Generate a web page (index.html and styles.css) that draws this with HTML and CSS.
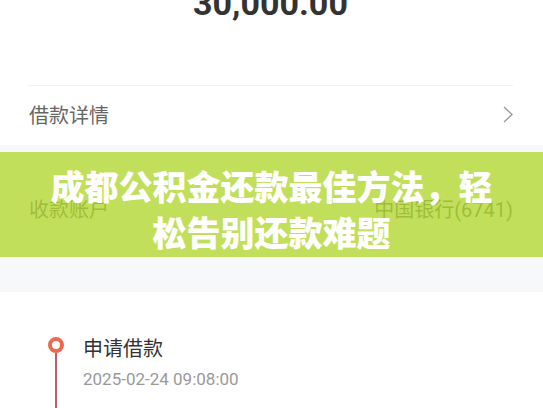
FILE: index.html
```html
<!DOCTYPE html>
<html lang="zh-CN">
<head>
  <meta charset="UTF-8" />
  <title>借款详情</title>
  <link rel="stylesheet" href="styles.css">
</head>
<body>
  <div class="page">
    <div class="card summary">
      <div class="amount">30,000.00</div>
      <div class="row detail-row">
        <span class="row-label">借款详情</span>
        <svg class="chevron" width="10" height="17" viewBox="0 0 10 17">
          <path d="M1 1 L9 8.5 L1 16" fill="none" stroke="#999" stroke-width="1.4" />
        </svg>
      </div>
    </div>

    <div class="card account">
      <div class="row">
        <span class="row-label">收款账户</span>
        <span class="row-value">中国银行(6741)</span>
      </div>
      <div class="banner">
        <h1>成都公积金还款最佳方法，轻松告别还款难题</h1>
      </div>
    </div>

    <div class="card timeline">
      <div class="step">
        <div class="step-mark">
          <span class="dot"></span>
          <span class="line"></span>
        </div>
        <div class="step-body">
          <div class="step-title">申请借款</div>
          <div class="step-time">2025-02-24 09:08:00</div>
        </div>
      </div>
    </div>
  </div>
</body>
</html>
```

FILE: styles.css
```css
* {
  margin: 0;
  padding: 0;
  box-sizing: border-box;
}

html, body {
  height: 100%;
  overflow: hidden;
  background: #f7f8fa;
  font-family: Roboto, "Noto Sans CJK SC", sans-serif;
}

.card {
  background: #fff;
  padding: 0 30px 0 28px;
}

.summary {
  display: flow-root;
  height: 145px;
}

.amount {
  margin-top: -17px;
  line-height: 40px;
  font-size: 34px;
  font-weight: 700;
  color: #333;
  text-align: center;
  margin-bottom: 62px;
}

.row {
  display: flex;
  align-items: center;
  justify-content: space-between;
  height: 58px;
}

.detail-row {
  border-top: 1px solid #f0f0f0;
}

.row-label {
  font-size: 20px;
  color: #666;
  padding-left: 1px;
}

.chevron {
  display: block;
}

.account {
  position: relative;
  margin-top: 7px;
  height: 105px;
  padding-top: 27px;
}

.account .row-label,
.account .row-value {
  color: #555;
}

.row-value {
  font-size: 20px;
}

.banner {
  position: absolute;
  top: 0;
  left: 0;
  right: 0;
  bottom: 0;
  background: rgba(178, 215, 50, 0.8);
  padding-top: 11px;
  display: flex;
  justify-content: center;
}

.banner h1 {
  max-width: 460px;
  font-family: "Noto Sans CJK SC", sans-serif;
  font-size: 34px;
  font-weight: 900;
  line-height: 46px;
  color: #fff;
  text-align: center;
}

.timeline {
  margin-top: 35px;
  padding: 45px 20px 40px 48px;
}

.step {
  display: flex;
  gap: 19px;
}

.step-mark {
  display: flex;
  flex-direction: column;
  align-items: center;
  width: 16px;
}

.dot {
  width: 16px;
  height: 16px;
  border: 4.5px solid #ec6a4f;
  border-radius: 50%;
  background: #fff;
}

.line {
  width: 2px;
  flex: 1;
  min-height: 60px;
  background: #c0596b;
}

.step-title {
  font-size: 20px;
  line-height: 22px;
  color: #333;
  font-family: "Noto Sans CJK SC", sans-serif;
}

.step-time {
  margin-top: 10px;
  font-size: 17px;
  line-height: 20px;
  color: #999;
}
```
